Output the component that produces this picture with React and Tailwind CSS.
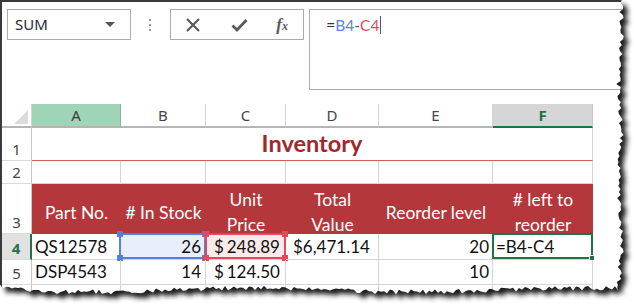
import React from 'react'

const cellFont = { fontFamily: 'Lato, "Open Sans", sans-serif' }
const uiFont = { fontFamily: '"Noto Sans", "Open Sans", sans-serif' }

// pseudo random for the torn paper edge
const rnd = (i) => {
  const s = Math.sin(i * 127.1 + 311.7) * 43758.5453
  return s - Math.floor(s)
}

function TornEdge() {
  const edge = []
  for (let y = 0; y <= 288; y += 3) {
    edge.push([620 + (rnd(y) - 0.5) * 5 + 1.5 * Math.sin(y / 17), y])
  }
  for (let x = 618; x >= 0; x -= 3) {
    const lift = x < 40 ? (40 - x) / 10 : 0
    edge.push([x, 290 + (rnd(x + 1000) - 0.5) * 5 + 2 * Math.sin(x / 53) - lift])
  }
  const pts = edge.map(([x, y]) => `${x.toFixed(1)},${y.toFixed(1)}`).join(' L')
  const paper = `M0,0 L${pts} Z`
  const outside = `M634,0 L${pts} L0,306 L634,306 Z`

  return (
    <svg className="absolute inset-0 pointer-events-none" width="634" height="306">
      <defs>
        <filter id="blur" x="-10%" y="-10%" width="120%" height="120%">
          <feGaussianBlur stdDeviation="2.4" />
        </filter>
        <clipPath id="out">
          <path d={outside} />
        </clipPath>
      </defs>
      <path d={outside} fill="white" />
      <g clipPath="url(#out)">
        <path d={paper} fill="#1e1e1e" transform="translate(5,5)" filter="url(#blur)" />
      </g>
    </svg>
  )
}

const W = [89, 85, 80, 93, 114, 100]

function RowHead({ n, h, active }) {
  return (
    <div
      className={`shrink-0 w-[30px] flex items-end justify-center pb-[1px] border-b border-[#dadada] ${
        active ? 'bg-[#e1e1e1] border-r-2 border-r-[#217346] text-[#217346] font-bold' : 'border-r border-r-[#c6c6c6] text-[#444]'
      } ${n === 1 ? 'text-[#3c6cc0]' : ''}`}
      style={{ height: h, ...uiFont }}
    >
      <span className="text-[15px] leading-[20px]">{n}</span>
    </div>
  )
}

function Cell({ w, className = '', children }) {
  return (
    <div className={`shrink-0 relative border-r border-b border-[#d4d4d4] flex items-center ${className}`} style={{ width: w }}>
      {children}
    </div>
  )
}

function Handles({ color }) {
  const sq = `absolute w-[6px] h-[6px] ${color}`
  return (
    <>
      <span className={`${sq} -left-[4px] -top-[4px]`} />
      <span className={`${sq} -right-[4px] -top-[4px]`} />
      <span className={`${sq} -left-[4px] -bottom-[4px]`} />
      <span className={`${sq} -right-[4px] -bottom-[4px]`} />
    </>
  )
}

function Money({ v }) {
  return (
    <div className="w-full flex justify-between pl-[8px] pr-[5px]">
      <span>$</span>
      <span>{v}</span>
    </div>
  )
}

function HeadCell({ w, lines }) {
  return (
    <div className="shrink-0 h-full bg-[#b3373b] text-white flex flex-col items-center justify-center pt-[6px] leading-[25px]" style={{ width: w }}>
      {lines.map((l) => (
        <span key={l}>{l}</span>
      ))}
    </div>
  )
}

export default function App() {
  const letters = ['A', 'B', 'C', 'D', 'E', 'F']

  return (
    <div className="relative w-[634px] h-[306px] overflow-hidden bg-white">
      <div className="h-full border-t-2 border-l-2 border-[#3a3a3a]">
        {/* formula bar */}
        <div className="h-[102px] flex items-start pt-[7px] pl-[5px]" style={uiFont}>
          <div className="w-[126px] h-[31px] border border-[#ababab] flex items-center justify-between pl-[7px] pr-[15px]">
            <span className="text-[15px] text-[#262a36]">SUM</span>
            <span className="w-0 h-0 border-l-[5px] border-r-[5px] border-t-[5px] border-l-transparent border-r-transparent border-t-[#555]" />
          </div>
          <div className="ml-[18px] mt-[10px] flex flex-col gap-[3px]">
            <span className="w-[2px] h-[2px] bg-[#9a9a9a]" />
            <span className="w-[2px] h-[2px] bg-[#9a9a9a]" />
            <span className="w-[2px] h-[2px] bg-[#9a9a9a]" />
          </div>
          <div className="ml-[19px] w-[136px] h-[31px] border border-[#ababab] flex items-center pl-[14px]">
            <svg width="16" height="14" viewBox="0 0 16 14">
              <path d="M2 1 L14 13 M14 1 L2 13" stroke="#5a5a5a" strokeWidth="2.2" />
            </svg>
            <svg className="ml-[30px]" width="17" height="14" viewBox="0 0 17 14">
              <path d="M1.5 7.5 L6 12 L15.5 2" stroke="#5a5a5a" strokeWidth="2.8" fill="none" />
            </svg>
            <span
              className="ml-[28px] text-[17px] italic font-bold text-[#5a5a5a] leading-none"
              style={{ fontFamily: '"Liberation Serif", "DejaVu Serif", serif' }}
            >
              f<span className="text-[12px]">x</span>
            </span>
          </div>
          <div className="ml-[5px] w-[330px] h-[81px] border border-[#ababab] pl-[16px] pt-[5px]">
            <div className="flex items-center text-[15.5px] leading-[20px]" style={cellFont}>
              <span className="text-[#333]">=</span>
              <span className="text-[#5b82e0]">B4</span>
              <span className="text-[#555]">-</span>
              <span className="text-[#e6485b]">C4</span>
              <span className="ml-[1px] w-px h-[18px] bg-[#555]" />
            </div>
          </div>
        </div>

        {/* column headers */}
        <div className="flex h-[24px]" style={uiFont}>
          <div className="shrink-0 w-[30px] h-full relative border-r border-[#d4d4d4] border-b-2 border-b-[#b5b5b5]">
            <span
              className="absolute right-[3px] bottom-[2px] w-0 h-0"
              style={{ borderBottom: '14px solid #dcdcdc', borderLeft: '14px solid transparent' }}
            />
          </div>
          {letters.map((l, i) => (
            <div
              key={l}
              className={`shrink-0 h-full flex items-center justify-center text-[15px] border-r ${
                l === 'A'
                  ? 'bg-[#9fd5b6] text-[#3a3a3a] border-r-[#8ab79b] border-b-2 border-b-[#b5b5b5]'
                  : l === 'F'
                  ? 'bg-[#d6d6d6] text-[#217346] font-bold border-r-[#c6c6c6] border-b-2 border-b-[#217346]'
                  : 'text-[#444] border-r-[#d4d4d4] border-b-2 border-b-[#b5b5b5]'
              }`}
              style={{ width: W[i] }}
            >
              {l}
            </div>
          ))}
        </div>

        <div style={cellFont} className="text-[17px] text-[#111]">
          {/* row 1 */}
          <div className="flex h-[33px]">
            <RowHead n={1} h={33} />
            <div className="shrink-0 w-[561px] border-b border-[#d65c5c] border-r border-r-[#d4d4d4] flex items-center justify-center">
              <span className="text-[23.5px] font-bold text-[#9e282d]">Inventory</span>
            </div>
          </div>
          {/* row 2 */}
          <div className="flex h-[23px]">
            <RowHead n={2} h={23} />
            {W.map((w, i) => (
              <Cell key={i} w={w} />
            ))}
          </div>
          {/* row 3 */}
          <div className="flex h-[50px] text-[17.5px]">
            <RowHead n={3} h={50} />
            <HeadCell w={W[0]} lines={['Part No.']} />
            <HeadCell w={W[1]} lines={['# In Stock']} />
            <HeadCell w={W[2]} lines={['Unit', 'Price']} />
            <HeadCell w={W[3]} lines={['Total', 'Value']} />
            <HeadCell w={W[4]} lines={['Reorder level']} />
            <HeadCell w={W[5]} lines={['# left to', 'reorder']} />
          </div>
          {/* row 4 */}
          <div className="flex h-[26px]">
            <RowHead n={4} h={26} active />
            <Cell w={W[0]} className="pl-[3px]">QS12578</Cell>
            <Cell w={W[1]} className="justify-end pr-[4px] bg-[#e8eefb]">
              26
              <div className="absolute -left-[2px] -top-[1px] -right-[1px] bottom-0 border-2 border-[#5080e0]">
                <Handles color="bg-[#5080e0]" />
              </div>
            </Cell>
            <Cell w={W[2]} className="bg-[#fbeaea]">
              <Money v="248.89" />
              <div className="absolute -left-[1px] -top-[1px] -right-[1px] bottom-0 border-2 border-[#e2495a]">
                <Handles color="bg-[#e2495a]" />
              </div>
            </Cell>
            <Cell w={W[3]} className="pl-[7px]">$6,471.14</Cell>
            <Cell w={W[4]} className="justify-end pr-[3px]">20</Cell>
            <Cell w={W[5]} className="pl-[3px]">
              =B4-C4
              <div className="absolute -left-[1px] -top-[1px] -right-[1px] bottom-0 border-2 border-[#217346]">
                <span className="absolute -right-[4px] -bottom-[4px] w-[6px] h-[6px] bg-[#217346] border border-white" />
              </div>
            </Cell>
          </div>
          {/* row 5 */}
          <div className="flex h-[25px]">
            <RowHead n={5} h={25} />
            <Cell w={W[0]} className="pl-[3px]">DSP4543</Cell>
            <Cell w={W[1]} className="justify-end pr-[4px]">14</Cell>
            <Cell w={W[2]}>
              <Money v="124.50" />
            </Cell>
            <Cell w={W[3]} />
            <Cell w={W[4]} className="justify-end pr-[3px]">10</Cell>
            <Cell w={W[5]} />
          </div>
          {/* row 6, torn away */}
          <div className="flex h-[25px]">
            <div className="shrink-0 w-[30px] border-r border-[#c6c6c6]" />
            {W.map((w, i) => (
              <Cell key={i} w={w} />
            ))}
          </div>
        </div>
      </div>
      <TornEdge />
    </div>
  )
}
